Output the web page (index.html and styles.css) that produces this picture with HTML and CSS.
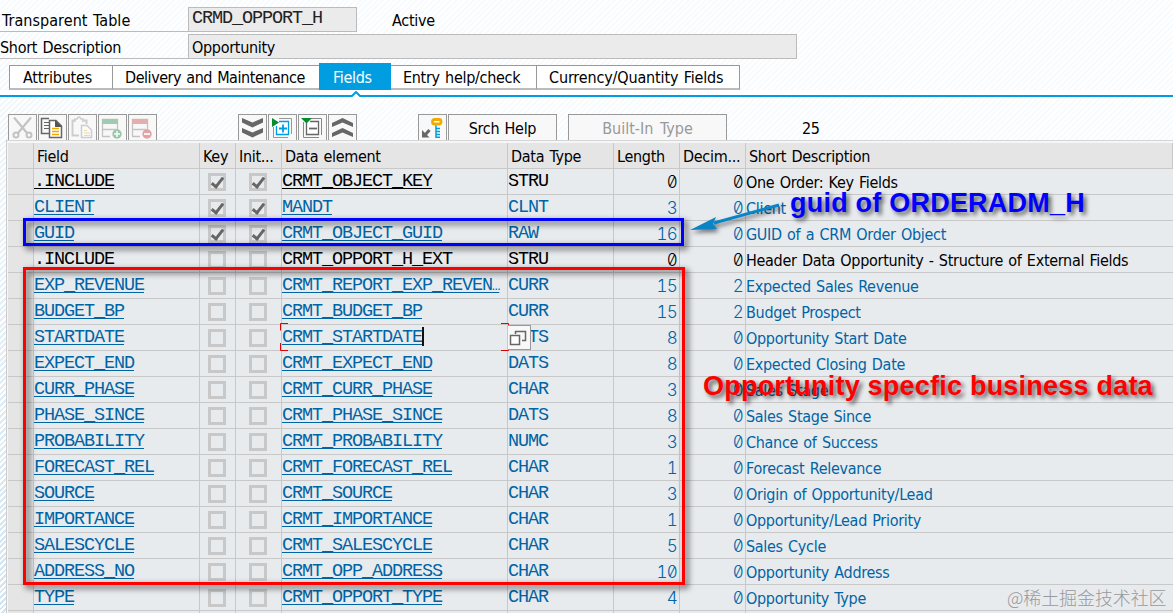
FILE: index.html
```html
<!DOCTYPE html>
<html lang="en">
<head>
    <meta charset="UTF-8">
    <meta name="viewport" content="width=device-width, initial-scale=1.0">
    <title>Dictionary: Display Table</title>
    <link rel="stylesheet" href="styles.css">
</head>
<body>
    <div class="form-row first">
        <label class="form-label indent">Transparent Table</label>
        <div class="form-value mono short">CRMD_OPPORT_H</div>
        <span class="status">Active</span>
    </div>
    <div class="form-row">
        <label class="form-label">Short Description</label>
        <div class="form-value long">Opportunity</div>
    </div>

    <div class="tabs">
        <div class="tab tab-attr"><span>Attributes</span></div>
        <div class="tab tab-delivery"><span>Delivery and Maintenance</span></div>
        <div class="tab tab-fields active"><span>Fields</span></div>
        <div class="tab tab-entry"><span>Entry help/check</span></div>
        <div class="tab tab-currency"><span>Currency/Quantity Fields</span></div>
    </div>
    <div class="tab-line">
        <svg class="tab-arrow" width="10" height="6" viewBox="0 0 10 6"><path d="M0 6 L5 1 L10 6" fill="#fff" stroke="#009de0" stroke-width="2"/></svg>
    </div>

    <div class="toolbar">
        <div class="tool-group">
            <div class="tool disabled">
                <svg viewBox="0 0 27 25"><path d="M5 2.500 L18 18 M22 2.500 L9 18" fill="none" stroke="#999" stroke-width="2.200"/><circle cx="7" cy="20" r="2.500" fill="none" stroke="#999" stroke-width="2"/><circle cx="20" cy="20" r="2.500" fill="none" stroke="#999" stroke-width="2"/></svg>
            </div>
            <div class="tool">
                <svg viewBox="0 0 27 25"><path d="M10 18.500 H2.500 V3.500 H10" fill="none" stroke="#666" stroke-width="1.500"/><path d="M5 7.500h5M5 10.500h5M5 13.500h5" stroke="#666"/><path d="M10.500 5.500 H17 L22.500 11 V22.500 H10.500 Z" fill="#fff" stroke="#666" stroke-width="1.500"/><path d="M16 5 L23 12 H16 Z" fill="#555"/><path d="M13 13.500h7M13 16.500h7M13 19.500h7" stroke="#f0ab00" stroke-width="1.700"/></svg>
            </div>
            <div class="tool disabled">
                <svg viewBox="0 0 27 25"><path d="M10 20.500 H3.500 V5.500 H6 M14 5.500 H17.500 V9" fill="none" stroke="#aaa" stroke-width="2"/><path d="M6 7 V4 H8 Q10 0 12 4 H14 V7" fill="none" stroke="#aaa" stroke-width="1.500"/><path d="M12.500 10.500 H18 L22.500 15 V22.500 H12.500 Z" fill="#fff" stroke="#aaa" stroke-width="1.500"/><path d="M15 15.500h3M15 18h6M15 20.500h6" stroke="#e7bd62" stroke-width="1.200"/></svg>
            </div>
            <div class="tool disabled">
                <svg viewBox="0 0 27 25"><path d="M3.500 21 V4.500 H18.500 V16 M3 14.500 H17 M3 21.500 H11" fill="none" stroke="#999" stroke-width="1.300"/><path d="M3 4 H19 V9 H3Z" fill="#59a776"/><circle cx="18" cy="19" r="4.700" fill="#4b9f69"/><path d="M15 19h6M18 16v6" stroke="#fff" stroke-width="1.500"/></svg>
            </div>
            <div class="tool disabled">
                <svg viewBox="0 0 27 25"><path d="M3.500 21 V4.500 H18.500 V16 M3 14.500 H17 M3 21.500 H11" fill="none" stroke="#999" stroke-width="1.300"/><path d="M3 4 H19 V9 H3Z" fill="#d67070"/><circle cx="18" cy="19" r="4.700" fill="#d45c5c"/><path d="M15 19h6" stroke="#fff" stroke-width="1.800"/></svg>
            </div>
        </div>
        <div class="tool-group expand-group">
            <div class="tool">
                <svg viewBox="0 0 27 25"><path d="M3 3 L13.500 7.500 L24 3 V7.500 L13.500 12.500 L3 7.500Z M3 13 L13.500 17.500 L24 13 V17.500 L13.500 22.500 L3 17.500Z" fill="#666"/></svg>
            </div>
            <div class="tool">
                <svg viewBox="0 0 27 25"><path d="M10 3.500 H22.500 V19 M4.500 12 V22.500 H19" fill="none" stroke="#999"/><path d="M10 6.500 H19.500 V19.500 H7.500 V11" fill="#fff" stroke="#009de0" stroke-width="1.300"/><path d="M10 13.500h8M14 9.500v8" stroke="#009de0" stroke-width="1.800"/><path d="M3 3 L10 7.500 L3 12Z" fill="#078a30"/></svg>
            </div>
            <div class="tool">
                <svg viewBox="0 0 27 25"><path d="M11 3.500 H22.500 V20 M4.500 7 V22.500 H20" fill="none" stroke="#888"/><path d="M7.500 8 V19.500 H19.500 V6.500 H11" fill="#fff" stroke="#666" stroke-width="1.300"/><path d="M10 13.500h8" stroke="#666" stroke-width="1.800"/><path d="M2 3 H13 L7.500 8.500Z" fill="#078a30"/></svg>
            </div>
            <div class="tool">
                <svg viewBox="0 0 27 25"><path d="M3 12 V8 L13.500 3 L24 8 V12 L13.500 7.500Z M3 22 V18 L13.500 13 L24 18 V22 L13.500 17.500Z" fill="#666"/></svg>
            </div>
        </div>
        <div class="tool-group help-group">
            <div class="tool">
                <svg viewBox="0 0 27 25"><rect x="13.500" y="4.500" width="8.500" height="4.500" rx="2" fill="#fff" stroke="#f0ab00" stroke-width="2.800"/><path d="M17 10.500V23M17 13.500h4M17 16.500h4M17 19.500h4M17 22.200h4" stroke="#009de0" stroke-width="1.500"/><path d="M10.500 15 L6 20" stroke="#666" stroke-width="3"/><path d="M3 15 V22.500 H10.500Z" fill="#666"/></svg>
            </div>
            <div class="tool text-tool srch">Srch Help</div>
        </div>
        <div class="text-tool tool builtin">Built-In Type</div>
        <span class="count">25</span>
    </div>

    <div class="grid">
        <div class="row head"><i></i><b>Field</b><b>Key</b><b>Init...</b><b>Data element</b><b>Data Type</b><b>Length</b><b>Decim...</b><b>Short Description</b></div>
        <div class="row black"><i></i><a>.INCLUDE</a><em class="on"></em><em class="on"></em><a>CRMT_OBJECT_KEY</a><span>STRU</span><span class="num">0</span><span class="num">0</span><p>One Order: Key Fields</p></div>
        <div class="row"><i></i><a>CLIENT</a><em class="on"></em><em class="on"></em><a>MANDT</a><span>CLNT</span><span class="num">3</span><span class="num">0</span><p>Client</p></div>
        <div class="row"><i></i><a>GUID</a><em class="on"></em><em class="on"></em><a>CRMT_OBJECT_GUID</a><span>RAW</span><span class="num">16</span><span class="num">0</span><p>GUID of a CRM Order Object</p></div>
        <div class="row black"><i></i><span>.INCLUDE</span><em></em><em></em><span>CRMT_OPPORT_H_EXT</span><span>STRU</span><span class="num">0</span><span class="num">0</span><p>Header Data Opportunity - Structure of External Fields</p></div>
        <div class="row"><i></i><a>EXP_REVENUE</a><em></em><em></em><a>CRMT_REPORT_EXP_REVEN<small>…</small></a><span>CURR</span><span class="num">15</span><span class="num">2</span><p>Expected Sales Revenue</p></div>
        <div class="row"><i></i><a>BUDGET_BP</a><em></em><em></em><a>CRMT_BUDGET_BP</a><span>CURR</span><span class="num">15</span><span class="num">2</span><p>Budget Prospect</p></div>
        <div class="row"><i></i><a>STARTDATE</a><em></em><em></em><a>CRMT_STARTDATE</a><span>DATS</span><span class="num">8</span><span class="num">0</span><p>Opportunity Start Date</p></div>
        <div class="row"><i></i><a>EXPECT_END</a><em></em><em></em><a>CRMT_EXPECT_END</a><span>DATS</span><span class="num">8</span><span class="num">0</span><p>Expected Closing Date</p></div>
        <div class="row"><i></i><a>CURR_PHASE</a><em></em><em></em><a>CRMT_CURR_PHASE</a><span>CHAR</span><span class="num">3</span><span class="num">0</span><p>Sales Stage</p></div>
        <div class="row"><i></i><a>PHASE_SINCE</a><em></em><em></em><a>CRMT_PHASE_SINCE</a><span>DATS</span><span class="num">8</span><span class="num">0</span><p>Sales Stage Since</p></div>
        <div class="row"><i></i><a>PROBABILITY</a><em></em><em></em><a>CRMT_PROBABILITY</a><span>NUMC</span><span class="num">3</span><span class="num">0</span><p>Chance of Success</p></div>
        <div class="row"><i></i><a>FORECAST_REL</a><em></em><em></em><a>CRMT_FORECAST_REL</a><span>CHAR</span><span class="num">1</span><span class="num">0</span><p>Forecast Relevance</p></div>
        <div class="row"><i></i><a>SOURCE</a><em></em><em></em><a>CRMT_SOURCE</a><span>CHAR</span><span class="num">3</span><span class="num">0</span><p>Origin of Opportunity/Lead</p></div>
        <div class="row"><i></i><a>IMPORTANCE</a><em></em><em></em><a>CRMT_IMPORTANCE</a><span>CHAR</span><span class="num">1</span><span class="num">0</span><p>Opportunity/Lead Priority</p></div>
        <div class="row"><i></i><a>SALESCYCLE</a><em></em><em></em><a>CRMT_SALESCYCLE</a><span>CHAR</span><span class="num">5</span><span class="num">0</span><p>Sales Cycle</p></div>
        <div class="row"><i></i><a>ADDRESS_NO</a><em></em><em></em><a>CRMT_OPP_ADDRESS</a><span>CHAR</span><span class="num">10</span><span class="num">0</span><p>Opportunity Address</p></div>
        <div class="row"><i></i><a>TYPE</a><em></em><em></em><a>CRMT_OPPORT_TYPE</a><span>CHAR</span><span class="num">4</span><span class="num">0</span><p>Opportunity Type</p></div>
        <div class="row"><i></i><span></span><span></span><span></span><span></span><span></span><span></span><span></span><p></p></div>
    </div>

    <!-- focused cell with its value help button -->
    <svg class="focus" width="229" height="28" viewBox="0 0 229 28"><path d="M.5 7.500V.5H8M221 .5H228.500V7.500M228.500 20V27.500H221M8 27.500H.5V20" fill="none" stroke="#e00000"/><path d="M143 4V23" stroke="#111" stroke-width="2"/></svg>
    <div class="value-help">
        <svg width="22" height="23" viewBox="0 0 22 23"><path d="M7.500 8V5.500H17.500V14.500H14" fill="none" stroke="#666" stroke-width="1.500"/><rect x="2.500" y="9.500" width="9" height="9" fill="#fff" stroke="#666" stroke-width="1.500"/></svg>
    </div>

    <!-- annotations -->
    <div class="frame frame-blue"></div>
    <div class="frame frame-red"></div>
    <svg class="arrow" width="100" height="40" viewBox="0 0 100 40"><path d="M89 4 L24 22" stroke="#0a84c6" stroke-width="3"/><path d="M0 29 L26 16 L23 23 L27 28Z" fill="#0a84c6"/></svg>
    <div class="note note-blue">guid of ORDERADM_H</div>
    <div class="note note-red">Opportunity specfic business data</div>
    <div class="watermark">@稀土掘金技术社区</div>
</body>
</html>
```
FILE: styles.css
```css
*, *::before, *::after {
    box-sizing: border-box;
}
body {
    margin: 0;
    width: 1173px;
    height: 613px;
    overflow: hidden;
    position: relative;
    font-family: "DejaVu Sans Condensed", "DejaVu Sans", sans-serif;
    font-stretch: condensed;
    font-size: 16px;
    letter-spacing: -0.3px;
    word-spacing: 1px;
    color: #000;
    background: linear-gradient(to top right, transparent 0, rgba(255, 255, 255, 0.85) 50%), repeating-linear-gradient(135deg, #fff 0, #fff 2px, #cfe5f3 2px, #cfe5f3 4px);
}
.mono, .row a, .row span {
    font-family: "Liberation Mono", monospace;
    font-size: 18.5px;
    letter-spacing: -1.102px;
}
/* Header fields */
.form-row {
    display: flex;
    height: 25px;
    margin-bottom: 2px;
    line-height: 27px;
}
.form-row.first {
    margin-top: 7px;
}
.form-label {
    width: 188px;
    border-bottom: 1px solid #bbb;
}
.indent {
    padding-left: 2px;
    letter-spacing: 0.05px;
}
.form-value {
    background: #ebebeb;
    border: 1px solid #bbb;
    padding-left: 3px;
    line-height: 25px;
}
.form-value.mono {
    line-height: 22px;
    color: #222;
}
.short {
    width: 169px;
}
.long {
    width: 609px;
}
.status {
    margin-left: 35px;
}
/* Tabs */
.tabs {
    display: flex;
    align-items: flex-end;
    height: 28px;
    margin-top: 3px;
    padding-left: 9px;
}
.tab {
    height: 25px;
    line-height: 23px;
    background: #fff;
    border: 1px solid #999;
    border-bottom: 2px solid #bbb;
    border-left-width: 0;
    padding-left: 12px;
    white-space: nowrap;
}
.tab-attr {
    width: 104px;
    border-left-width: 1px;
    padding-left: 13px;
    letter-spacing: -0.2px;
}
.tab-delivery {
    width: 206px;
    border-right: 0;
    letter-spacing: -0.45px;
}
.tab-fields {
    width: 72px;
    padding-left: 14px;
}
.tab-entry {
    width: 146px;
}
.tab-currency {
    width: 203px;
    letter-spacing: -0.15px;
}
.tab.active {
    height: 27px;
    line-height: 29px;
    background: #009de0;
    border: 0;
    color: #fff;
}
.tab-line {
    height: 7px;
    background: #fff;
    border-bottom: 2px solid #009de0;
    position: relative;
}
.tab-arrow {
    position: absolute;
    left: 351px;
    bottom: -2px;
}
/* Toolbar */
.toolbar {
    display: flex;
    height: 26px;
    margin-top: 17px;
    padding-left: 8px;
}
.tool-group {
    display: flex;
    gap: 1px;
}
.tool {
    width: 29px;
    height: 26px;
    background: #f8f8f8;
    border: 1px solid #999;
    border-bottom: 0;
}
.tool svg {
    display: block;
    width: 27px;
    height: 25px;
}
.disabled svg {
    opacity: 0.55;
}
.expand-group {
    margin-left: 81px;
}
.help-group {
    margin-left: 61px;
}
.text-tool {
    text-align: center;
    line-height: 27px;
}
.srch {
    width: 109px;
}
.builtin {
    width: 159px;
    margin-left: 11px;
    color: #999;
    letter-spacing: 0;
    word-spacing: 2px;
}
.count {
    margin-left: 75px;
    line-height: 29px;
}
/* Field list */
.grid {
    margin-left: 6px;
    padding-left: 1px;
    border-left: 1px solid #ccc;
    border-top: 1px solid #d5d5d5;
    background: #f4f6f7;
    padding-top: 2px;
}
.row {
    display: grid;
    grid-template-columns: 26px 166px 36px 46px 226px 106px 66px 66px 1fr;
    height: 26px;
    background: #e8ebee;
    color: #0064a5;
}
.row > * {
    margin: 0;
    height: 26px;
    border-right: 1px solid #c8c8c8;
    border-bottom: 1px solid #c8c8c8;
    white-space: nowrap;
    line-height: 26px;
}
.row i {
    background: #e5e5e5;
}
.row b {
    font-weight: normal;
    padding-left: 3px;
    line-height: 28px;
}
.head {
    background: #e5e5e5;
}
.head, .black {
    color: #000;
}
.row a {
    text-decoration: underline;
    text-decoration-thickness: 1px;
    text-underline-offset: 2px;
    text-decoration-skip-ink: none;
}
.row small {
    font-size: 14px;
}
.row p {
    border-right: 0;
    line-height: 28px;
}
.row .num {
    font-family: Inter, sans-serif;
    font-weight: 300;
    font-size: 17px;
    font-feature-settings: "tnum", "zero";
    letter-spacing: -0.8px;
    text-align: right;
    padding-right: 2px;
}
/* Checkboxes */
.row em {
    padding: 4px 0 0 8px;
}
.row em + em {
    padding-left: 13px;
}
.row em::before {
    content: "";
    display: block;
    width: 18px;
    height: 18px;
    border: 3px solid #c8c8c8;
}
.row em.on {
    position: relative;
}
.row em.on::after {
    content: "";
    position: absolute;
    left: 14px;
    top: 6px;
    width: 7px;
    height: 13px;
    border: solid #666;
    border-width: 0 3px 3px 0;
    transform: rotate(38deg);
}
.row em + em.on::after {
    left: 19px;
}
/* Focused cell */
.focus {
    position: absolute;
    left: 280px;
    top: 323px;
}
.value-help {
    position: absolute;
    left: 508px;
    top: 325px;
    width: 23px;
    height: 25px;
    background: #f8f8f8;
    border: 1px solid #999;
    border-left: 0;
}
/* Annotations */
.frame {
    position: absolute;
    border: 3px solid;
    filter: drop-shadow(3px 3px 3px rgba(0, 0, 0, 0.75));
}
.frame-blue {
    left: 23px;
    top: 218px;
    width: 661px;
    height: 28px;
    border-color: #00f;
}
.frame-red {
    left: 23px;
    top: 267px;
    width: 662px;
    height: 318px;
    border-color: #f00;
}
.arrow {
    position: absolute;
    left: 690px;
    top: 201px;
    filter: drop-shadow(2px 3px 2px rgba(0, 0, 0, 0.5));
}
.note {
    position: absolute;
    font-family: "Liberation Sans", Arial, sans-serif;
    font-weight: bold;
    font-size: 27px;
    line-height: 30px;
    letter-spacing: 0.22px;
    word-spacing: 0;
    white-space: nowrap;
    text-shadow: 3px 3px 4px rgba(0, 0, 0, 0.6);
}
.note-blue {
    left: 790px;
    top: 188px;
    color: #00f;
}
.note-red {
    left: 703px;
    top: 371px;
    color: #f00;
}
.watermark {
    position: absolute;
    left: 1007px;
    top: 584px;
    font-family: "Noto Sans CJK SC", sans-serif;
    font-weight: 300;
    font-size: 18px;
    line-height: 26px;
    letter-spacing: -0.1px;
    color: #999;
    white-space: nowrap;
}
```
